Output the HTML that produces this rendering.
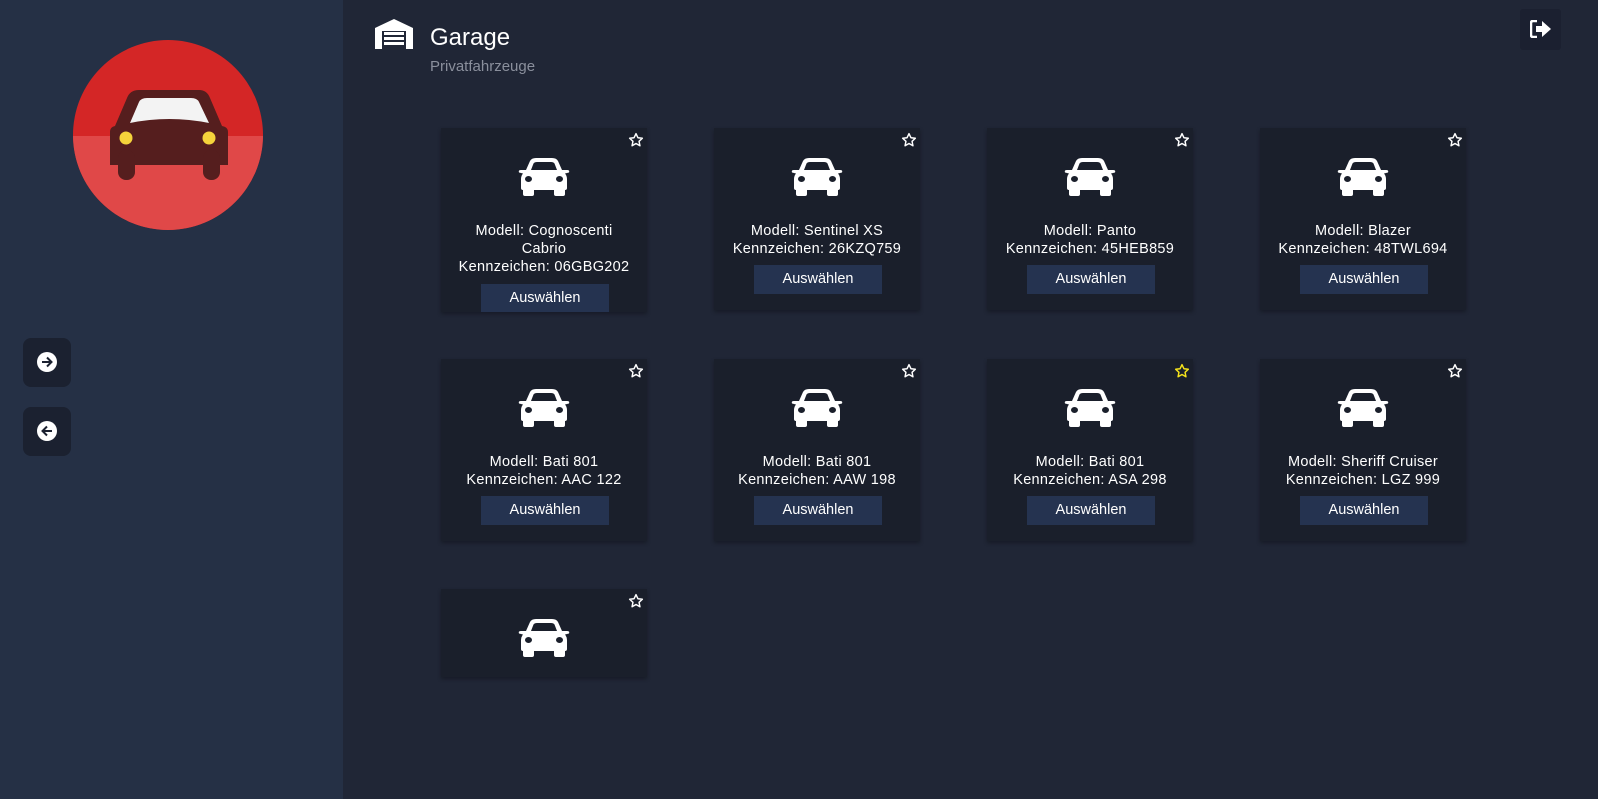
<!DOCTYPE html>
<html><head><meta charset="utf-8"><style>
*{margin:0;padding:0;box-sizing:border-box}
body{width:1598px;height:799px;background:#202636;font-family:"Liberation Sans",sans-serif;overflow:hidden;position:relative;color:#fff}
.side{position:absolute;left:0;top:0;width:343px;height:799px;background:#253045}
.logo{position:absolute;left:73px;top:40px;width:190px;height:190px;border-radius:50%;overflow:hidden;background:#d42626}
.logo .bot{position:absolute;left:0;top:96px;width:190px;height:94px;background:#e04848}
.nb{position:absolute;left:23px;width:48px;height:49px;border-radius:8px;background:#1b2130}
.nb svg{position:absolute;left:14px;top:14px}
.exit{position:absolute;left:1520px;top:9px;width:41px;height:41px;border-radius:3px;background:#1b2030}
h1{position:absolute;left:430px;top:24px;font-size:24px;font-weight:normal}
.sub{position:absolute;left:430px;top:58px;font-size:15px;color:#8a8f9c}
.card{position:absolute;width:206px;background:#1a1f2b;box-shadow:0 2px 4px rgba(0,0,0,.3);text-align:center;overflow:hidden}
.card .star{position:absolute;right:3px;top:4px}
.card .car{position:absolute;left:77px;top:30px}
.card .t{position:absolute;left:0;width:206px;font-size:14.5px;line-height:18px;letter-spacing:.3px}
.btn{position:absolute;left:40px;width:128px;height:29px;background:#253350;font-size:14.5px;line-height:29px}
</style></head><body>
<div class="side">
 <div class="logo"><div class="bot"></div>
  <svg style="position:absolute;left:0;top:0" width="190" height="190" viewBox="0 0 190 190">
   <path d="M37 125 L37 92 Q37 87 42 86 L54 58 Q57 50 66 50 L126 50 Q134 50 137 58 L149 86 Q155 87 155 92 L155 125 Z" fill="#551e1e"/>
   <rect x="45" y="110" width="17" height="30" rx="8" fill="#551e1e"/><rect x="130" y="110" width="17" height="30" rx="8" fill="#551e1e"/>
   <path d="M57 83 L66 62 Q68 58 74 58 L118 58 Q124 58 126 62 L136 83 Q96 75 57 83Z" fill="#f3f3f3"/>
   <circle cx="53" cy="98" r="6.5" fill="#f5d33b"/><circle cx="136" cy="98" r="6.5" fill="#f5d33b"/>
  </svg></div>
 <div class="nb" style="top:338px"><svg width="20" height="20" viewBox="0 0 20 20"><circle cx="10" cy="10" r="10" fill="#fff"/><path d="M5 10h9M10 5.5l4.5 4.5-4.5 4.5" stroke="#1b2130" stroke-width="2" fill="none"/></svg></div>
 <div class="nb" style="top:407px"><svg width="20" height="20" viewBox="0 0 20 20"><circle cx="10" cy="10" r="10" fill="#fff"/><path d="M15 10H6M10 5.5L5.5 10l4.5 4.5" stroke="#1b2130" stroke-width="2" fill="none"/></svg></div>
</div>
<svg style="position:absolute;left:375px;top:19px" width="38" height="30" viewBox="0 0 38 30"><path d="M0 9 L19 0 L38 9 L38 30 L0 30Z" fill="#fff"/><rect x="7" y="12" width="24" height="18" fill="#202636"/><rect x="9" y="13" width="20" height="3" fill="#fff"/><rect x="9" y="18" width="20" height="3" fill="#fff"/><rect x="9" y="23" width="20" height="3" fill="#fff"/></svg>
<h1>Garage</h1><div class="sub">Privatfahrzeuge</div>
<div class="exit"><svg style="position:absolute;left:10px;top:11px" width="22" height="18" viewBox="0 0 22 18"><path d="M7 1H3Q1 1 1 3V15Q1 17 3 17H7" stroke="#fff" stroke-width="2.5" fill="none"/><path d="M6 6H12V1L21 9L12 17V12H6Z" fill="#fff"/></svg></div>
<div id="cards"></div>
<script>
const star='<svg width="16" height="16" viewBox="0 0 24 24"><path d="M12 2.5l2.9 6.1 6.6.8-4.9 4.6 1.3 6.6L12 17.3l-5.9 3.3 1.3-6.6-4.9-4.6 6.6-.8z" fill="none" stroke="C" stroke-width="2.2" stroke-linejoin="round"/></svg>';
const car='<svg width="52" height="38" viewBox="0 0 52 38"><path d="M8 12 L12 3 Q13.5 0 18 0 H34 Q38.5 0 40 3 L44 12 H49 Q52 12 51 14.5 L47 15.5 Q49 18 49 21 V30 Q49 32 47 32 H5 Q3 32 3 30 V21 Q3 18 5 15.5 L1 14.5 Q0 12 3 12Z" fill="#fff"/><path d="M13 12 L15.5 5.5 Q16.5 4 19 4 H33 Q35.5 4 36.5 5.5 L39 12Z" fill="#1a1f2b"/><ellipse cx="10.5" cy="21" rx="3.5" ry="3" fill="#1a1f2b"/><ellipse cx="41.5" cy="21" rx="3.5" ry="3" fill="#1a1f2b"/><rect x="5" y="28" width="11" height="10" rx="2" fill="#fff"/><rect x="36" y="28" width="11" height="10" rx="2" fill="#fff"/></svg>';
const data=[
[441,128,184,["Modell: Cognoscenti","Cabrio","Kennzeichen: 06GBG202"],0],
[714,128,182,["Modell: Sentinel XS","Kennzeichen: 26KZQ759"],0],
[987,128,182,["Modell: Panto","Kennzeichen: 45HEB859"],0],
[1260,128,182,["Modell: Blazer","Kennzeichen: 48TWL694"],0],
[441,359,182,["Modell: Bati 801","Kennzeichen: AAC 122"],0],
[714,359,182,["Modell: Bati 801","Kennzeichen: AAW 198"],0],
[987,359,182,["Modell: Bati 801","Kennzeichen: ASA 298"],1],
[1260,359,182,["Modell: Sheriff Cruiser","Kennzeichen: LGZ 999"],0],
[441,589,88,[],0]];
let h='';
for(const [x,y,hh,l,f] of data){
 let t=l.map((s,i)=>'<div class="t" style="top:'+(94+i*18)+'px">'+s+'</div>').join('');
 let bt=l.length==3?156:137;
 h+='<div class="card" style="left:'+x+'px;top:'+y+'px;height:'+hh+'px"><div class="star">'+star.replace('C',f?'#f5e31b':'#fff')+'</div><div class="car">'+car+'</div>'+t+(l.length?'<div class="btn" style="top:'+bt+'px">Auswählen</div>':'')+'</div>';
}
document.getElementById('cards').innerHTML=h;
</script>
</body></html>
